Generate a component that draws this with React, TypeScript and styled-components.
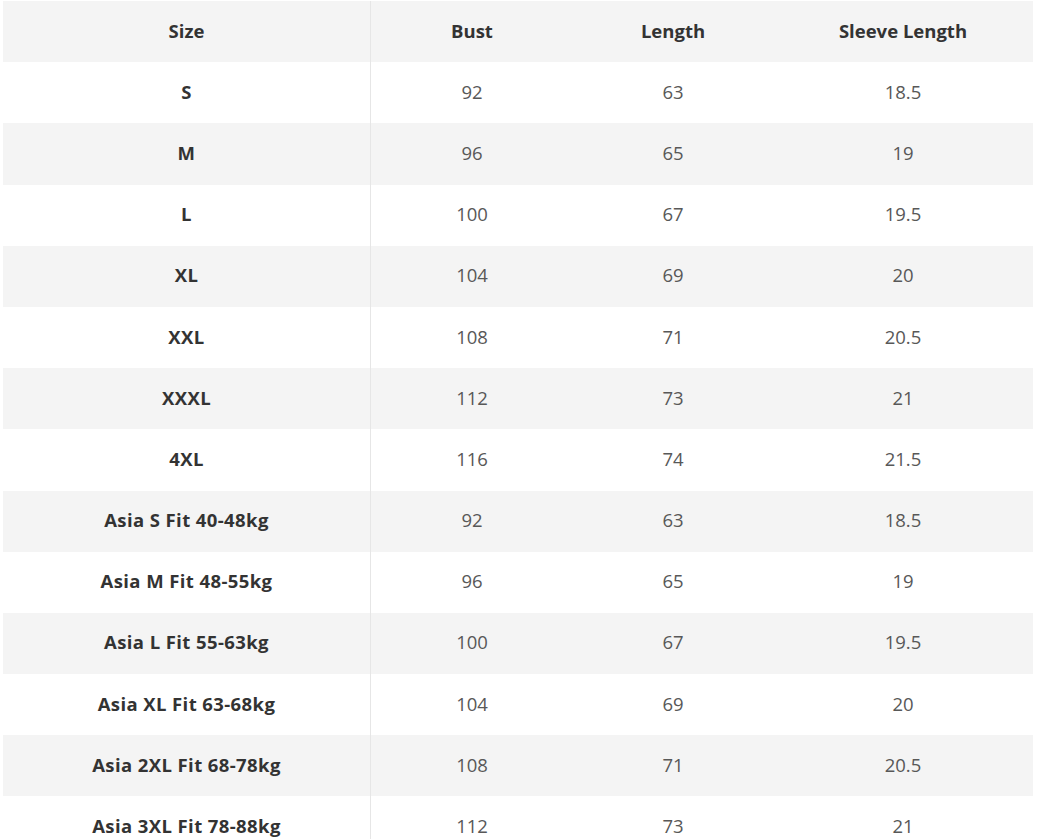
import React from "react";
import styled, { createGlobalStyle } from "styled-components";

const Global = createGlobalStyle`
  html, body { margin: 0; padding: 0; background: #ffffff; }
  body { font-family: "Open Sans", "Noto Sans", sans-serif; }
`;

const Page = styled.div`
  padding: 1px 0 0 3px;
  width: 1045px;
  height: 839px;
  box-sizing: border-box;
  overflow: hidden;
`;

const Table = styled.div`
  display: grid;
  grid-template-columns: 368px 202px 200px 260px;
  width: 1030px;
`;

const Row = styled.div<{ $shade: boolean }>`
  display: contents;
  & > div {
    background: ${(p) => (p.$shade ? "#f4f4f4" : "#ffffff")};
  }
`;

const Cell = styled.div<{ $bold?: boolean; $divider?: boolean; $spaced?: boolean }>`
  height: 61.2px;
  display: flex;
  align-items: center;
  justify-content: center;
  padding-bottom: 3px;
  font-size: 18.5px;
  letter-spacing: ${(p) => (p.$spaced ? "0.4px" : "0")};
  font-weight: ${(p) => (p.$bold ? 700 : 400)};
  color: ${(p) => (p.$bold ? "#333333" : "#585858")};
  border-right: ${(p) => (p.$divider ? "1px solid #e6e6e6" : "none")};
  box-sizing: border-box;
  white-space: nowrap;
`;

const header = ["Size", "Bust", "Length", "Sleeve Length"];

const rows: [string, string, string, string][] = [
  ["S", "92", "63", "18.5"],
  ["M", "96", "65", "19"],
  ["L", "100", "67", "19.5"],
  ["XL", "104", "69", "20"],
  ["XXL", "108", "71", "20.5"],
  ["XXXL", "112", "73", "21"],
  ["4XL", "116", "74", "21.5"],
  ["Asia S Fit 40-48kg", "92", "63", "18.5"],
  ["Asia M Fit 48-55kg", "96", "65", "19"],
  ["Asia L Fit 55-63kg", "100", "67", "19.5"],
  ["Asia XL Fit 63-68kg", "104", "69", "20"],
  ["Asia 2XL Fit 68-78kg", "108", "71", "20.5"],
  ["Asia 3XL Fit 78-88kg", "112", "73", "21"],
];

export default function App() {
  return (
    <>
      <Global />
      <Page>
        <Table>
          <Row $shade={true}>
            {header.map((h, i) => (
              <Cell key={h} $bold $divider={i === 0}>
                {h}
              </Cell>
            ))}
          </Row>
          {rows.map((r, ri) => (
            <Row key={r[0]} $shade={ri % 2 === 1}>
              {r.map((v, i) => (
                <Cell key={i} $bold={i === 0} $divider={i === 0} $spaced={i === 0}>
                  {v}
                </Cell>
              ))}
            </Row>
          ))}
        </Table>
      </Page>
    </>
  );
}
